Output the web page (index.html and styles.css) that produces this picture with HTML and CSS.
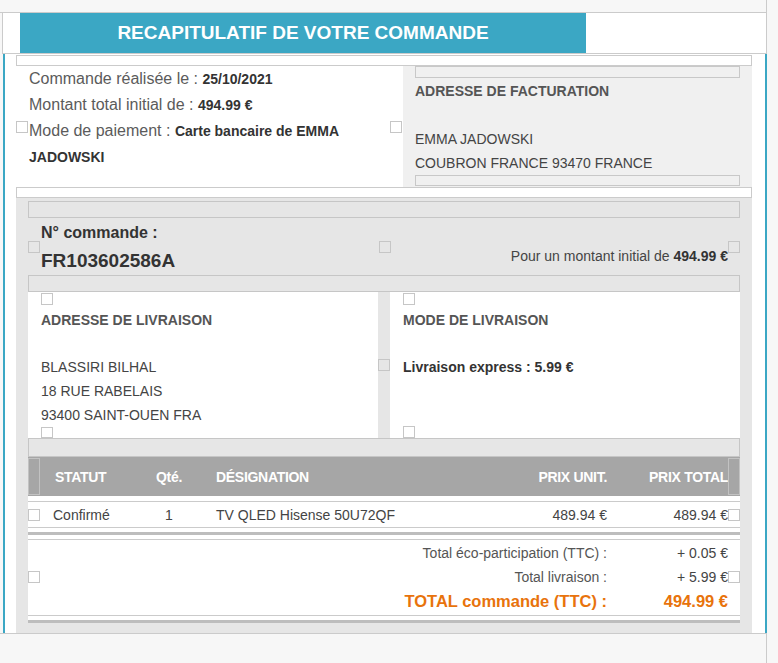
FILE: index.html
```html
<!DOCTYPE html>
<html lang="fr">
<head>
    <meta charset="UTF-8">
    <meta name="viewport" content="width=device-width, initial-scale=1.0">
    <title>Récapitulatif de votre commande</title>
    <link rel="stylesheet" href="styles.css">
</head>
<body>

<div class="page">
    <div class="top-strip"></div>

    <div class="head">
        <h1 class="title">RECAPITULATIF DE VOTRE COMMANDE</h1>
    </div>

    <div class="mail">
        <div class="spacer"></div>

        <div class="summary">
            <div class="icon-cell wide"><span class="ph"></span></div>
            <div class="summary-text">
                <p>Commande réalisée le : <b>25/10/2021</b></p>
                <p>Montant total initial de : <b>494.99 €</b></p>
                <p>Mode de paiement : <b>Carte bancaire de EMMA JADOWSKI</b></p>
            </div>
            <div class="icon-cell wide"><span class="ph"></span></div>
            <div class="billing">
                <div class="spacer tall"></div>
                <h3>ADRESSE DE FACTURATION</h3>
                <p class="addr">EMMA JADOWSKI<br>COUBRON FRANCE 93470 FRANCE</p>
                <div class="spacer"></div>
            </div>
        </div>

        <div class="spacer"></div>

        <div class="order">
            <div class="spacer gray s15"></div>

            <div class="order-head">
                <div class="icon-cell"><span class="ph"></span></div>
                <div class="order-no">
                    <div class="order-label">N° commande :</div>
                    <div class="order-num">FR103602586A</div>
                </div>
                <div class="icon-cell"><span class="ph"></span></div>
                <div class="order-amount">Pour un montant initial de <b>494.99 €</b></div>
                <div class="icon-cell"><span class="ph"></span></div>
            </div>

            <div class="spacer gray s15"></div>

            <div class="delivery">
                <div class="panel">
                    <span class="ph"></span>
                    <h3>ADRESSE DE LIVRAISON</h3>
                    <p class="addr">BLASSIRI BILHAL<br>18 RUE RABELAIS<br>93400 SAINT-OUEN FRA</p>
                    <span class="ph bottom"></span>
                </div>
                <div class="icon-cell"><span class="ph"></span></div>
                <div class="panel">
                    <span class="ph"></span>
                    <h3>MODE DE LIVRAISON</h3>
                    <p class="addr"><b>Livraison express : 5.99 €</b></p>
                    <span class="ph bottom"></span>
                </div>
            </div>

            <div class="spacer gray s17"></div>

            <div class="lines">
                <div class="cols table-head">
                    <span class="edge"></span>
                    <span class="pad-l head-l">STATUT</span>
                    <span class="center">Qté.</span>
                    <span class="desig">DÉSIGNATION</span>
                    <span class="right">PRIX UNIT.</span>
                    <span class="right">PRIX TOTAL</span>
                    <span class="edge"></span>
                </div>

                <div class="cols row">
                    <span class="ph"></span>
                    <span class="pad-l">Confirmé</span>
                    <span class="center">1</span>
                    <span class="desig">TV QLED Hisense 50U72QF</span>
                    <span class="right">489.94 €</span>
                    <span class="right">489.94 €</span>
                    <span class="ph"></span>
                </div>

                <div class="band"></div>

                <div class="cols totals">
                    <span class="ph tot-icon-l"></span>
                    <span class="tot-label">Total éco-participation (TTC) :</span>
                    <span class="tot-value">+ 0.05 €</span>
                    <span class="tot-label">Total livraison :</span>
                    <span class="tot-value">+ 5.99 €</span>
                    <span class="tot-label grand">TOTAL commande (TTC) :</span>
                    <span class="tot-value grand">494.99 €</span>
                    <span class="ph tot-icon-r"></span>
                </div>

                <div class="band"></div>
            </div>
        </div>
    </div>

    <div class="foot"></div>
</div>

</body>
</html>
```

FILE: styles.css
```css
body {
    margin: 0;
    background-color: #f7f7f7;
    font-family: "Liberation Sans", Arial, sans-serif;
    color: #444;
}
p, h1, h3 {
    margin: 0;
}
.page {
    width: 767px;
}
.top-strip {
    height: 12px;
    border-bottom: 1px solid #cbcbcb;
    border-right: 1px solid #cbcbcb;
}
.head {
    height: 40px;
    margin-left: 2px;
    padding-left: 17px;
    background-color: #fff;
    border-left: 1px solid #cbcbcb;
    border-right: 1px solid #cbcbcb;
    border-bottom: 1px solid #cbcbcb;
}
.title {
    width: 566px;
    height: 40px;
    background-color: #3ba7c4;
    color: #fff;
    font-size: 19px;
    font-weight: bold;
    line-height: 40px;
    text-align: center;
}
.mail {
    margin-left: 3px;
    padding: 1px 13px 0 11px;
    background-color: #fff;
    border-left: 2px solid #3ba7c4;
    border-right: 2px solid #3ba7c4;
}
.spacer {
    height: 9px;
    border: 1px solid #cbcbcb;
}
.spacer.tall {
    height: 10px;
}
.spacer.gray {
    border-color: #c6c6c6;
}
.s15 {
    height: 15px !important;
}
.s17 {
    height: 17px !important;
}

/* broken picture placeholder */
.ph {
    display: block;
    width: 10px;
    height: 10px;
    border: 1px solid #c6c6c6;
}
.icon-cell {
    width: 12px;
    flex-shrink: 0;
    display: flex;
    align-items: center;
}
.icon-cell.wide {
    width: 13px;
}

/* top summary */
.summary {
    display: flex;
    height: 121px;
}
.summary-text {
    flex: 1;
    font-size: 16px;
    line-height: 26px;
    color: #5b5b5b;
}
.summary-text b {
    font-size: 14px;
    line-height: 20px;
    color: #333;
}
.billing {
    width: 349px;
    box-sizing: border-box;
    padding: 0 12px 1px;
    background-color: #f0f0f0;
}
.billing .spacer {
    border-color: #c8c8c8;
}
h3 {
    font-size: 14px;
    line-height: 26px;
    color: #555;
}
.addr {
    margin-top: 23px;
    font-size: 14px;
    line-height: 24px;
    color: #444;
}
.addr b {
    color: #333;
}

/* order block */
.order {
    padding: 3px 12px 10px;
    background-color: #e6e6e6;
}
.order-head {
    display: flex;
    align-items: center;
    height: 57px;
}
.order-no {
    flex: 1;
    padding-left: 1px;
    font-weight: bold;
    color: #333;
    line-height: 28px;
}
.order-label {
    font-size: 16px;
}
.order-num {
    font-size: 19px;
}
.order-amount {
    flex: 1;
    align-self: flex-end;
    padding-bottom: 8px;
    font-size: 14px;
    line-height: 22px;
    text-align: right;
}
.order-amount b {
    color: #333;
}
.delivery {
    display: flex;
    height: 146px;
}
.panel {
    width: 350px;
    box-sizing: border-box;
    padding: 1px 0 0 13px;
    display: flex;
    flex-direction: column;
    background-color: #fff;
}
.panel h3 {
    margin-top: 2px;
}
.panel .addr {
    margin-top: 22px;
}
.ph.bottom {
    margin-top: auto;
}

/* item lines */
.lines {
    background-color: #fff;
}
.cols {
    display: grid;
    grid-template-columns: 12px 104px 50px 1fr 120px 121px 12px;
    align-items: center;
    font-size: 14px;
}
.table-head {
    height: 39px;
    background-color: #a6a6a6;
    color: #fff;
    font-weight: bold;
    letter-spacing: -0.3px;
}
.edge {
    height: 37px;
    border: 1px solid #c2c2c2;
    box-sizing: border-box;
}
.pad-l {
    padding-left: 13px;
}
.head-l {
    padding-left: 15px;
}
.center {
    text-align: center;
}
.desig {
    padding-left: 22px;
}
.right {
    text-align: right;
}
.row {
    height: 25px;
    margin-top: 5px;
    border-top: 1px solid #cbcbcb;
    border-bottom: 1px solid #cbcbcb;
}
.band {
    height: 3px;
    margin: 4px 0;
    background-color: #bdbdbd;
}
.band:last-child {
    margin-bottom: 0;
}
.totals {
    grid-template-rows: 24px 24px 24px;
    padding-top: 1px;
    height: 74px;
    border-top: 1px solid #cbcbcb;
    border-bottom: 1px solid #cbcbcb;
    line-height: 24px;
}
.tot-icon-l {
    grid-column: 1;
    grid-row: 1 / 4;
}
.tot-icon-r {
    grid-column: 7;
    grid-row: 1 / 4;
}
.tot-label {
    grid-column: 2 / 6;
    text-align: right;
    color: #555;
}
.tot-value {
    grid-column: 6;
    text-align: right;
}
.grand {
    font-size: 16.5px;
    font-weight: bold;
    color: #e8730c;
}
.foot {
    height: 30px;
    border-top: 1px solid #cbcbcb;
    border-right: 1px solid #cbcbcb;
}
```
